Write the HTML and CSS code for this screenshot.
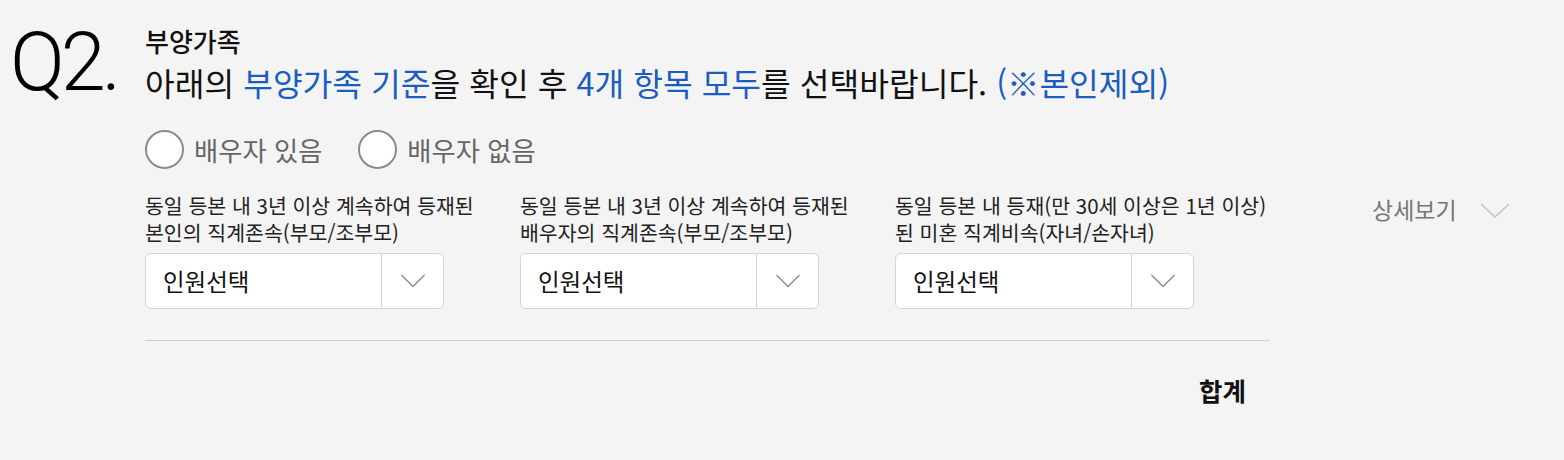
FILE: index.html
```html
<!DOCTYPE html>
<html lang="ko">
<head>
<meta charset="utf-8">
<link rel="stylesheet" href="styles.css">
</head>
<body>
<div class="question">
  <div class="qnum">Q2.</div>
  <div class="qbody">
    <div class="qtitle">부양가족</div>
    <div class="qdesc">아래의 <span class="hl">부양가족 기준</span>을 확인 후 <span class="hl">4개 항목 모두</span>를 선택바랍니다. <span class="hl">(※본인제외)</span></div>
    <div class="radios">
      <label class="radio"><span class="circle"></span><span class="rlabel">배우자 있음</span></label>
      <label class="radio"><span class="circle"></span><span class="rlabel">배우자 없음</span></label>
    </div>
    <div class="fields">
      <div class="field">
        <div class="flabel">동일 등본 내 3년 이상 계속하여 등재된<br>본인의 직계존속(부모/조부모)</div>
        <div class="select"><span class="stext">인원선택</span><span class="sarrow"><svg width="26" height="14" viewBox="0 0 26 14"><path d="M1.5 1 L13 12.5 L24.5 1" fill="none" stroke="#8a8a8a" stroke-width="1.3"/></svg></span></div>
      </div>
      <div class="field">
        <div class="flabel">동일 등본 내 3년 이상 계속하여 등재된<br>배우자의 직계존속(부모/조부모)</div>
        <div class="select"><span class="stext">인원선택</span><span class="sarrow"><svg width="26" height="14" viewBox="0 0 26 14"><path d="M1.5 1 L13 12.5 L24.5 1" fill="none" stroke="#8a8a8a" stroke-width="1.3"/></svg></span></div>
      </div>
      <div class="field">
        <div class="flabel">동일 등본 내 등재(만 30세 이상은 1년 이상)<br>된 미혼 직계비속(자녀/손자녀)</div>
        <div class="select"><span class="stext">인원선택</span><span class="sarrow"><svg width="26" height="14" viewBox="0 0 26 14"><path d="M1.5 1 L13 12.5 L24.5 1" fill="none" stroke="#8a8a8a" stroke-width="1.3"/></svg></span></div>
      </div>
      <div class="detail"><span>상세보기</span><svg width="30" height="15" viewBox="0 0 30 15"><path d="M1 1 L15 14 L29 1" fill="none" stroke="#c0c0c0" stroke-width="1.3"/></svg></div>
    </div>
    <div class="divider"></div>
    <div class="total">합계</div>
  </div>
</div>
</body>
</html>
```
FILE: styles.css
```css
html, body {
  margin: 0;
  padding: 0;
  background: #f4f4f4;
}
body {
  font-family: "Noto Sans CJK KR", "Noto Sans", sans-serif;
  color: #111;
}
.question {
  display: flex;
  padding-left: 10px;
}
.qnum {
  width: 135px;
  margin-top: 22px;
  font-family: Roboto, "Noto Sans", sans-serif;
  font-weight: 300;
  font-size: 81px;
  line-height: 81px;
  letter-spacing: -4px;
  color: #000;
  white-space: nowrap;
}
.qbody {
  display: flex;
  flex-direction: column;
  padding-top: 23px;
}
.qtitle {
  font-size: 26px;
  font-weight: 500;
  line-height: 36px;
}
.hl {
  color: #1b5cc0;
}
.qdesc {
  font-size: 32.3px;
  line-height: 46px;
  color: #111;
  white-space: nowrap;
}
.radios {
  display: flex;
  gap: 36px;
  margin-top: 25px;
}
.radio {
  display: flex;
  align-items: center;
  gap: 10px;
}
.circle {
  width: 35px;
  height: 35px;
  border: 2px solid #8a8a8a;
  border-radius: 50%;
  background: #fff;
}
.rlabel {
  font-size: 26.3px;
  line-height: 38px;
  color: #666;
}
.fields {
  display: flex;
  margin-top: 23px;
}
.field {
  width: 299px;
  margin-right: 76px;
}
.flabel {
  font-size: 20.5px;
  line-height: 27px;
  color: #222;
  white-space: nowrap;
}
.select {
  margin-top: 7px;
  height: 54px;
  border: 1px solid #d5d5d5;
  border-radius: 6px;
  background: #fff;
  display: flex;
}
.stext {
  flex: 1;
  padding-left: 17px;
  font-size: 23.5px;
  line-height: 54px;
  color: #111;
}
.sarrow {
  width: 61px;
  border-left: 1px solid #d5d5d5;
  display: flex;
  align-items: center;
  justify-content: center;
}
.detail {
  margin-left: 102px;
  margin-top: 4px;
  display: flex;
  align-items: center;
  gap: 23px;
  height: 27px;
  font-size: 23px;
  color: #777;
  line-height: 27px;
}
.detail svg {
  margin-top: 2px;
}
.divider {
  width: 1125px;
  height: 1px;
  background: #cfcfcf;
  margin-top: 31px;
}
.total {
  width: 1101px;
  text-align: right;
  font-size: 25.5px;
  font-weight: 700;
  line-height: 30px;
  margin-top: 34px;
}
```
